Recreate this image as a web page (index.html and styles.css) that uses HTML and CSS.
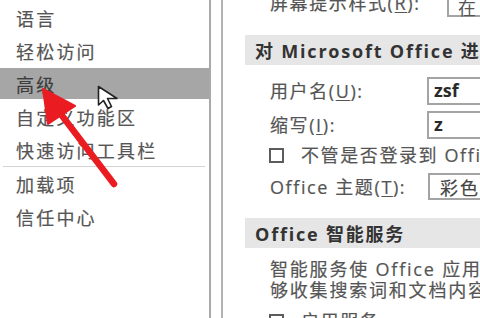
FILE: index.html
```html
<!DOCTYPE html>
<html lang="zh-CN">
<head>
<meta charset="utf-8">
<title>选项 - 高级</title>
<link rel="stylesheet" href="styles.css">
</head>
<body>
<div class="app">
  <nav class="sidebar">
    <div class="nav-item">语言</div>
    <div class="nav-item">轻松访问</div>
    <div class="nav-item active">高级</div>
    <div class="nav-item">自定义功能区</div>
    <div class="nav-item">快速访问工具栏</div>
    <div class="nav-sep"></div>
    <div class="nav-item">加载项</div>
    <div class="nav-item">信任中心</div>
  </nav>
  <div class="gutter"></div>
  <main class="content">
    <div class="row row-top">
      <span class="label">屏幕提示样式(<u>R</u>):</span>
      <span class="box box-top">在</span>
    </div>
    <div class="section">对 Microsoft Office 进行个性化设置</div>
    <div class="row row-field first">
      <span class="label">用户名(<u>U</u>):</span>
      <span class="box box-input">zsf</span>
    </div>
    <div class="row row-field second">
      <span class="label">缩写(<u>I</u>):</span>
      <span class="box box-input">z</span>
    </div>
    <div class="row row-check">
      <span class="check"></span>
      <span class="label">不管是否登录到 Office 都始终使用这些值</span>
    </div>
    <div class="row row-theme">
      <span class="label">Office 主题(<u>T</u>):</span>
      <span class="box box-select">彩色</span>
    </div>
    <div class="section section-2">Office 智能服务</div>
    <p class="desc"><span class="line">智能服务使 Office 应用程序能</span><span class="line">够收集搜索词和文档内容</span></p>
    <div class="row row-check last">
      <span class="check"></span>
      <span class="label">启用服务</span>
    </div>
  </main>
</div>

<svg class="overlay" width="480" height="318" viewBox="0 0 480 318" aria-hidden="true">
  <line x1="60" y1="113" x2="114" y2="184" stroke="#ea1c22" stroke-width="6.5" stroke-linecap="round"/>
  <polygon points="43,89 75,106 48,124" fill="#ea1c22" stroke="#ea1c22" stroke-width="2" stroke-linejoin="round"/>
  <path d="M98.5 86.5 L98.5 105 L103.5 100.5 L108 108.5 L111.5 106.5 L107.5 98.5 L117 98.5 Z" fill="#ffffff" stroke="#222" stroke-width="1.6" stroke-linejoin="round"/>
</svg>
</body>
</html>
```

FILE: styles.css
```css
html, body {
  margin: 0;
  padding: 0;
}
body {
  width: 480px;
  height: 318px;
  overflow: hidden;
  background: #ffffff;
  font-family: "Open Sans", "Noto Sans CJK SC", sans-serif;
  color: #555555;
  position: relative;
}
.app {
  display: flex;
  width: 480px;
  height: 318px;
}
.sidebar {
  width: 209px;
  flex: none;
  padding-top: 1px;
  border-right: 2px solid #a9a9a9;
  box-sizing: content-box;
}
.nav-item {
  height: 33px;
  display: flex;
  align-items: center;
  padding-left: 16px;
  font-size: 18px;
  letter-spacing: 2.2px;
  color: #555555;
  -webkit-text-stroke: 0.2px #555555;
}
.nav-item.active {
  background: #a6a6a6;
  color: #3c3c3c;
  -webkit-text-stroke: 0.2px #3c3c3c;
  height: 31px;
  margin: 1px 0;
}
.nav-sep {
  height: 1px;
  margin: 0 4px 0 3px;
  background: #d4d4d4;
}
.gutter {
  width: 10px;
  flex: none;
  border-right: 2px solid #b4b4b4;
}
.content {
  flex: 1;
  min-width: 0;
  overflow: hidden;
}
.row {
  display: flex;
  align-items: center;
  padding-left: 47px;
  white-space: nowrap;
}
.label {
  flex: none;
  font-size: 18px;
  letter-spacing: 1.6px;
  color: #555555;
  line-height: 1;
  -webkit-text-stroke: 0.2px #555555;
}
.label u {
  text-decoration: underline;
  text-underline-offset: 2px;
}
.box {
  flex: none;
  box-sizing: border-box;
  border: 2px solid #a4a4a4;
  background: #fff;
  display: flex;
  align-items: center;
  font-size: 18px;
  width: 90px;
}
.row-top {
  margin-top: -12px;
  height: 29px;
}
.row-top .label {
  width: 177px;
  margin-top: 1px;
}
.box-top {
  height: 29px;
  padding-left: 9px;
  padding-top: 8px;
  color: #555;
  letter-spacing: 2px;
}
.section {
  margin-top: 18px;
  margin-left: 22px;
  height: 30px;
  background: #e6e6e6;
  display: flex;
  align-items: center;
  padding-left: 10px;
  font-size: 18px;
  font-weight: 700;
  letter-spacing: 1.8px;
  color: #333333;
  white-space: nowrap;
}
.row-field {
  height: 28px;
}
.row-field.first {
  margin-top: 12px;
}
.row-field.second {
  margin-top: 6px;
}
.row-field .label {
  width: 157px;
}
.box-input {
  height: 28px;
  padding-left: 5px;
  font-weight: 700;
  color: #2a2a2a;
  padding-bottom: 3px;
}
.row-check {
  margin-top: 9px;
  height: 14px;
}
.check {
  flex: none;
  width: 15px;
  height: 15px;
  box-sizing: border-box;
  border: 2px solid #5c5c5c;
  margin-right: 17px;
  margin-left: -1px;
}
.row-theme {
  margin-top: 11px;
  height: 27px;
}
.row-theme .label {
  width: 158px;
}
.box-select {
  height: 27px;
  padding-left: 10px;
  letter-spacing: 2px;
  color: #444;
  -webkit-text-stroke: 0.2px #444;
}
.section-2 {
  margin-top: 18px;
}
.desc {
  margin: 11px 0 0 0;
  padding-left: 47px;
  font-size: 18px;
  line-height: 21px;
  letter-spacing: 1.8px;
  color: #555555;
  white-space: nowrap;
  -webkit-text-stroke: 0.2px #555555;
}
.line {
  display: block;
}
.row-check.last {
  margin-top: 13px;
}
.overlay {
  position: absolute;
  left: 0;
  top: 0;
  pointer-events: none;
}
```
